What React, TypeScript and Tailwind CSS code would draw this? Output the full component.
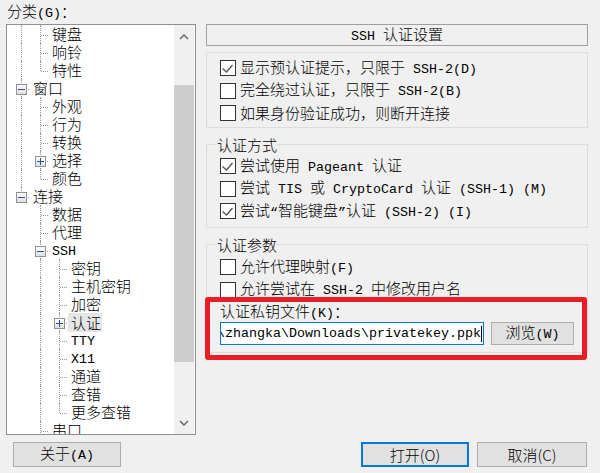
import React from "react";

const WIDE = /[\u2E80-\u9FFF\uFF00-\uFF60\u3000-\u303F]/;

function T({ s }: { s: string }) {
  const parts: { w: boolean; t: string }[] = [];
  for (const ch of s) {
    const w = WIDE.test(ch);
    const last = parts[parts.length - 1];
    if (last && last.w === w) last.t += ch;
    else parts.push({ w, t: ch });
  }
  return (
    <span className="whitespace-pre">
      {parts.map((p, i) =>
        p.w ? (
          <span key={i} className="font-['Noto_Sans_CJK_SC',sans-serif] font-light text-[15px]">
            {p.t}
          </span>
        ) : (
          <span key={i} className="font-['Liberation_Mono',monospace] text-[13.33px]">
            {p.t}
          </span>
        )
      )}
    </span>
  );
}

type R = { t: string; g: boolean[]; last?: boolean; exp?: "+" | "-"; sel?: boolean };

const rows: R[] = [
  { t: "键盘", g: [true] },
  { t: "响铃", g: [true] },
  { t: "特性", g: [true], last: true },
  { t: "窗口", g: [], exp: "-" },
  { t: "外观", g: [true] },
  { t: "行为", g: [true] },
  { t: "转换", g: [true] },
  { t: "选择", g: [true], exp: "+" },
  { t: "颜色", g: [true], last: true },
  { t: "连接", g: [], exp: "-", last: true },
  { t: "数据", g: [false] },
  { t: "代理", g: [false] },
  { t: "SSH", g: [false], exp: "-" },
  { t: "密钥", g: [false, true] },
  { t: "主机密钥", g: [false, true] },
  { t: "加密", g: [false, true] },
  { t: "认证", g: [false, true], exp: "+", sel: true },
  { t: "TTY", g: [false, true] },
  { t: "X11", g: [false, true] },
  { t: "通道", g: [false, true] },
  { t: "查错", g: [false, true] },
  { t: "更多查错", g: [false, true], last: true },
  { t: "串口", g: [false] },
];

function Expander({ kind }: { kind: "+" | "-" }) {
  return (
    <span className="absolute left-[4px] top-[5px] w-[11px] h-[11px] border border-[#919191] bg-gradient-to-b from-white to-[#dedede] flex items-center justify-center">
      <span className="relative w-[7px] h-[1px] bg-[#2c4f9e]">
        {kind === "+" && <span className="absolute left-[3px] top-[-3px] w-[1px] h-[7px] bg-[#2c4f9e]" />}
      </span>
    </span>
  );
}

function TreeRow({ r }: { r: R }) {
  return (
    <div className="h-[18px] flex items-center pl-[5px] leading-[18px]">
      {r.g.map((v, i) => (
        <span key={i} className="relative w-[19px] h-full shrink-0">
          {v && <span className="absolute left-[9px] top-0 bottom-0 border-l border-dotted border-[#999]" />}
        </span>
      ))}
      <span className="relative w-[19px] h-full shrink-0">
        <span
          className={
            r.last
              ? "absolute left-[9px] top-0 h-[10px] border-l border-dotted border-[#999]"
              : "absolute left-[9px] top-0 bottom-0 border-l border-dotted border-[#999]"
          }
        />
        <span className="absolute left-[10px] top-[10px] w-[7px] border-t border-dotted border-[#999]" />
        {r.exp && <Expander kind={r.exp} />}
      </span>
      <span className={r.sel ? "ml-[-1px] pl-[3px] pr-[1px] h-[19px] leading-[19px] bg-[#e6e6e6]" : "ml-[-1px] pl-[3px] pr-[1px]"}>
        <T s={r.t} />
      </span>
    </div>
  );
}

function Scrollbar() {
  return (
    <div className="w-[20px] bg-[#f0f0f0] flex flex-col">
      <div className="h-[23px] flex items-center justify-center">
        <svg width="10" height="6" viewBox="0 0 10 6">
          <polyline points="1,5 5,1 9,5" fill="none" stroke="#606060" strokeWidth="1.4" />
        </svg>
      </div>
      <div className="mt-[37px] h-[277px] bg-[#cdcdcd]" />
      <div className="flex-1" />
      <div className="h-[22px] flex items-center justify-center">
        <svg width="10" height="6" viewBox="0 0 10 6">
          <polyline points="1,1 5,5 9,1" fill="none" stroke="#606060" strokeWidth="1.4" />
        </svg>
      </div>
    </div>
  );
}

function Check({ checked }: { checked?: boolean }) {
  return (
    <span className="w-[16px] h-[16px] border border-[#333] bg-white shrink-0 flex">
      {checked && (
        <svg width="14" height="14" viewBox="0 0 14 14">
          <polyline points="1.5,7.5 5.5,11 11.5,4" fill="none" stroke="#555" strokeWidth="1.3" />
        </svg>
      )}
    </span>
  );
}

function CheckRow({ s, checked }: { s: string; checked?: boolean }) {
  return (
    <div className="h-[22.5px] flex items-center pl-[13px]">
      <Check checked={checked} />
      <span className="ml-[4px] leading-[20px]">
        <T s={s} />
      </span>
    </div>
  );
}

export default function App() {
  return (
    <div className="w-[600px] h-[473px] bg-[#f0f0f0] relative overflow-hidden text-black">
      <div className="flex pl-[6px]">
        <div className="w-[190px] flex flex-col">
          <div className="h-[24px] leading-[22px] pl-[1px]">
            <T s="分类(G)：" />
          </div>
          <div className="h-[411px] border border-[#8e8e8e] bg-white flex pr-[1px]">
            <div className="flex-1 overflow-hidden">
              {rows.map((r, i) => (
                <TreeRow key={i} r={r} />
              ))}
            </div>
            <Scrollbar />
          </div>
        </div>

        <div className="ml-[10px] w-[382px] pt-[24px] flex flex-col">
          <div className="h-[22px] border border-[#a0a0a0] flex items-center justify-center leading-[20px]">
            <T s="SSH 认证设置" />
          </div>

          <div className="mt-[6px] h-[76px] border border-[#dcdcdc] pt-[4px] flex flex-col">
            <CheckRow checked s="显示预认证提示，只限于 SSH-2(D)" />
            <CheckRow s="完全绕过认证，只限于 SSH-2(B)" />
            <CheckRow s="如果身份验证成功，则断开连接" />
          </div>

          <div className="relative mt-[16px] h-[84px] border border-[#dcdcdc] pt-[10px] flex flex-col">
            <span className="absolute left-[8px] top-[-9px] h-[18px] leading-[18px] pl-[2px] bg-[#f0f0f0]">
              <T s="认证方式" />
            </span>
            <CheckRow checked s="尝试使用 Pageant 认证" />
            <CheckRow s="尝试 TIS 或 CryptoCard 认证 (SSH-1) (M)" />
            <CheckRow checked s="尝试“智能键盘”认证 (SSH-2) (I)" />
          </div>

          <div className="relative mt-[16px] h-[109px] border border-[#dcdcdc] pt-[11px] flex flex-col">
            <span className="absolute left-[8px] top-[-9px] h-[18px] leading-[18px] pl-[2px] bg-[#f0f0f0]">
              <T s="认证参数" />
            </span>
            <CheckRow s="允许代理映射(F)" />
            <CheckRow s="允许尝试在 SSH-2 中修改用户名" />
            <div className="h-[20px] leading-[20px] pl-[13px]">
              <T s="认证私钥文件(K)：" />
            </div>
            <div className="mt-[1px] flex pl-[13px]">
              <div className="w-[264px] h-[23px] border border-[#0078d7] bg-white overflow-hidden flex items-center justify-end pr-[1px]">
                <span className="whitespace-nowrap leading-[20px] font-['Liberation_Mono',monospace] text-[13.33px]">
                  C:\Users\zhangka\Downloads\privatekey.ppk
                </span>
                <span className="w-[1px] h-[16px] bg-black shrink-0" />
              </div>
              <div className="ml-[7px] w-[83px] h-[23px] border border-[#adadad] bg-[#e1e1e1] flex items-center justify-center leading-[20px]">
                <T s="浏览(W)" />
              </div>
            </div>
          </div>
        </div>
      </div>

      <div className="flex mt-[7px] pl-[13px] pr-[13px]">
        <div className="w-[108px] h-[25px] border border-[#adadad] bg-[#e1e1e1] flex items-center justify-center leading-[20px]">
          <T s="关于(A)" />
        </div>
        <div className="flex-1" />
        <div className="w-[108px] h-[25px] border-2 border-[#0078d7] bg-[#e1e1e1] flex items-center justify-center leading-[20px] font-['Noto_Sans_CJK_SC',sans-serif] font-light text-[15px]">
          打开(O)
        </div>
        <div className="ml-[8px] w-[110px] h-[25px] border border-[#adadad] bg-[#e1e1e1] flex items-center justify-center leading-[20px] font-['Noto_Sans_CJK_SC',sans-serif] font-light text-[15px]">
          取消(C)
        </div>
      </div>

      <div className="absolute left-[205px] top-[297px] w-[382px] h-[63px] border-[5px] border-[#ec1c24] rounded-[3px] pointer-events-none" />
    </div>
  );
}
